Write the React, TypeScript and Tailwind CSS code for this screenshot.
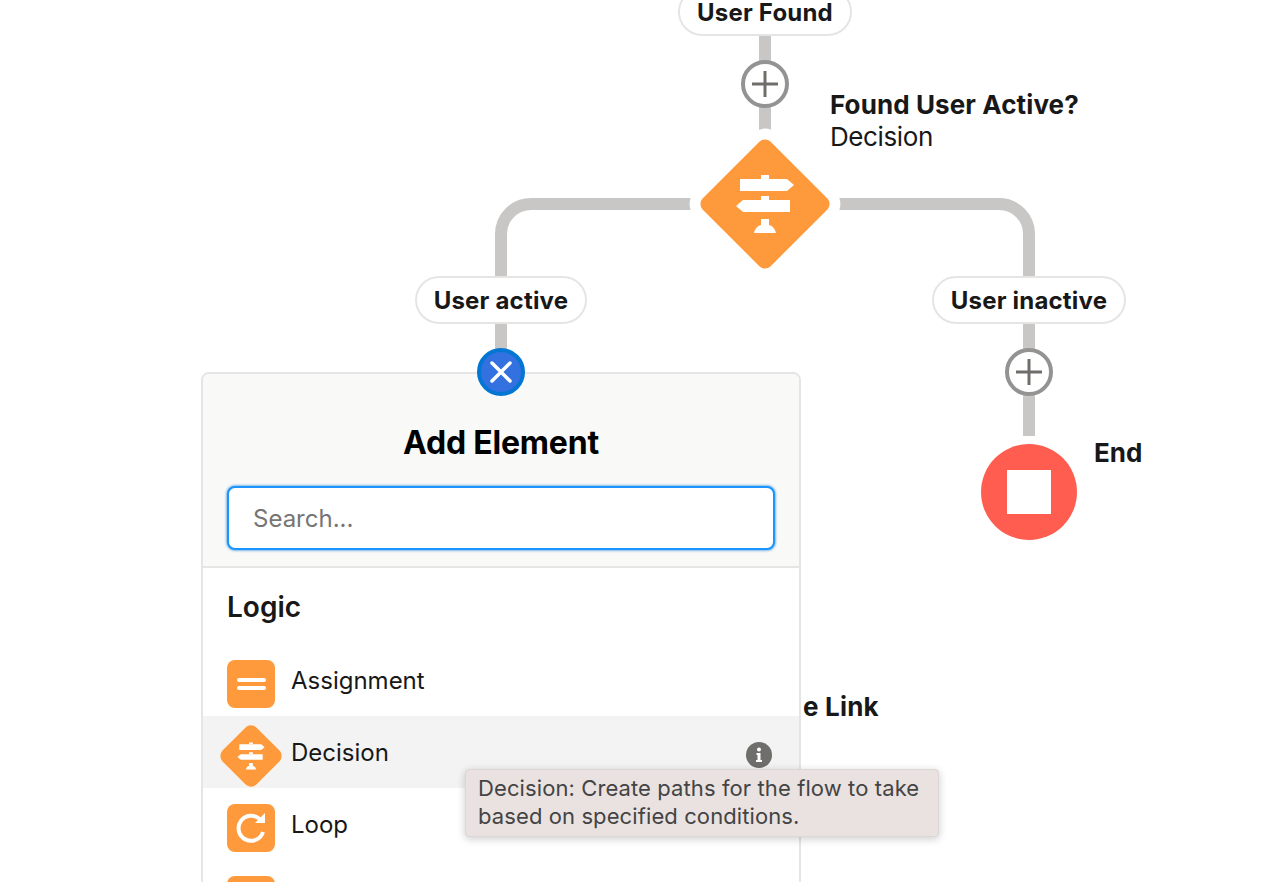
import React from 'react';

const SignpostIcon = ({ className }: { className: string }) => (
  <svg viewBox="0 0 60 62" className={className} fill="#fff">
    <path d="M26 1h8v4h-8zM26 22h8v4h-8z" />
    <path d="M5 5H52L59 11L52 17H5Z" />
    <path d="M8 26H55V38H8L1 32Z" />
    <path d="M26 45h8v6c4 1 6 4 7 8H19c1-4 3-7 7-8z" />
  </svg>
);

const PlusButton = ({ className }: { className: string }) => (
  <div className={`absolute flex h-12 w-12 items-center justify-center rounded-full border-4 border-[#939393] bg-white ${className}`}>
    <svg viewBox="0 0 28 28" className="h-7 w-7" stroke="#706e6b" strokeWidth="3">
      <path d="M1 14H27M14 1V27" />
    </svg>
  </div>
);

const Pill = ({ label, className }: { label: string; className: string }) => (
  <div className={`absolute flex h-12 items-center justify-center rounded-3xl border-2 border-[#e5e5e5] bg-white pt-[2px] text-[24px] font-bold tracking-[0.2px] text-[#181818] ${className}`}>
    {label}
  </div>
);

const AssignmentIcon = () => (
  <div className="flex h-12 w-12 shrink-0 flex-col items-center justify-center gap-1 rounded-lg bg-[#ff9a3c]">
    <div className="h-1 w-[29px] rounded-full bg-white" />
    <div className="h-1 w-[29px] rounded-full bg-white" />
  </div>
);

const DecisionIcon = () => (
  <div className="relative h-12 w-12 shrink-0">
    <div className="absolute inset-0 rotate-45 rounded-lg bg-[#ff9a3c]" />
    <SignpostIcon className="absolute left-[10px] top-[10px] h-[29px] w-[28px]" />
  </div>
);

const LoopIcon = () => (
  <div className="h-12 w-12 shrink-0 rounded-lg bg-[#ff9a3c]">
    <svg viewBox="0 0 48 48" className="h-12 w-12">
      <path d="M33 15.5A12.5 12.5 0 1 0 36 28" fill="none" stroke="#fff" strokeWidth="4" />
      <path d="M38 9V19H28Z" fill="#fff" />
    </svg>
  </div>
);

const elements = [
  { label: 'Assignment', icon: <AssignmentIcon />, active: false },
  { label: 'Decision', icon: <DecisionIcon />, active: true },
  { label: 'Loop', icon: <LoopIcon />, active: false },
  { label: '', icon: <AssignmentIcon />, active: false },
];

export default function App() {
  return (
    <div className="relative h-[882px] w-[1268px] overflow-hidden bg-white font-['Inter',sans-serif] text-[#181818]">
      {/* connectors */}
      <svg className="absolute left-0 top-0 h-[882px] w-[1268px]" fill="none" stroke="#c9c7c5" strokeWidth="12">
        <path d="M765 30V204" />
        <path d="M765 204H531A30 30 0 0 0 501 234V372" />
        <path d="M765 204H999A30 30 0 0 1 1029 234V436" />
      </svg>

      <Pill label="User Found" className="left-[678px] top-[-12px] w-[174px]" />
      <PlusButton className="left-[741px] top-[60px]" />

      {/* white halo, then the orange diamond */}
      <div className="absolute left-[707px] top-[146px] h-[116px] w-[116px] rotate-45 rounded-[16px] bg-white" />
      <div className="absolute left-[717px] top-[156px] h-24 w-24 rotate-45 rounded-lg bg-[#ff9a3c]" />
      <SignpostIcon className="absolute left-[735px] top-[174px] h-[62px] w-[60px]" />

      <div className="absolute left-[830px] top-[89px] text-[26px] leading-8">
        <div className="font-bold tracking-[0.1px]">Found User Active?</div>
        <div className="tracking-[-0.4px]">Decision</div>
      </div>

      <Pill label="User active" className="left-[415px] top-[276px] w-[172px]" />
      <Pill label="User inactive" className="left-[932px] top-[276px] w-[194px]" />
      <PlusButton className="left-[1005px] top-[348px]" />

      <div className="absolute left-[981px] top-[444px] flex h-24 w-24 items-center justify-center rounded-full bg-[#ff5d4f]">
        <div className="h-11 w-11 bg-white" />
      </div>
      <div className="absolute left-[1094px] top-[437px] text-[26px] font-bold leading-8">End</div>
      <div className="absolute left-[803px] top-[691px] text-[26px] font-bold leading-8 tracking-[0.2px]">e Link</div>

      {/* add element panel */}
      <div className="absolute left-[201px] top-[372px] w-[600px] overflow-hidden rounded-lg border-2 border-[#e5e5e5] bg-white">
        <div className="border-b-2 border-[#e5e5e5] bg-[#f9f9f8] px-6 pb-4">
          <h2 className="pt-[51px] text-center text-[32px] font-bold leading-9 tracking-[-0.2px] text-black">Add Element</h2>
          <input
            placeholder="Search..."
            readOnly
            className="mt-[25px] h-16 w-full rounded-lg border-2 border-[#1b96ff] bg-white px-6 text-[24px] shadow-[0_0_3px_#0176d3] outline-none placeholder:text-[#757575]"
          />
        </div>
        <h3 className="px-6 pt-[21px] text-[28px] font-semibold leading-9">Logic</h3>
        <div className="mt-[19px] flex flex-col">
          {elements.map((el, i) => (
            <div key={i} className={`flex h-[72px] items-start gap-4 px-6 pt-4 ${el.active ? 'bg-[#f3f3f3]' : ''}`}>
              {el.icon}
              <span className="mt-[3px] text-[24px] leading-9">{el.label}</span>
              {el.active && (
                <svg viewBox="0 0 26 26" className="ml-auto mr-[3px] mt-[10px] h-[26px] w-[26px]">
                  <circle cx="13" cy="13" r="13" fill="#706e6b" />
                  <circle cx="13" cy="7.5" r="2" fill="#fff" />
                  <path d="M10.5 11h4v7h1.5v2h-6v-2h1.5v-5h-1z" fill="#fff" />
                </svg>
              )}
            </div>
          ))}
        </div>
      </div>

      {/* close button sits on the panel edge */}
      <div className="absolute left-[477px] top-[348px] flex h-12 w-12 items-center justify-center rounded-full border-4 border-[#0176d3] bg-[#3371e0]">
        <svg viewBox="0 0 22 22" className="h-[22px] w-[22px]" stroke="#fff" strokeWidth="3.5" strokeLinecap="round">
          <path d="M2 2L20 20M20 2L2 20" />
        </svg>
      </div>

      <div className="absolute left-[465px] top-[769px] h-[68px] w-[474px] rounded-sm border border-[#dcd6d4] bg-[#e9e2e0] px-3 pt-[4px] text-[22px] leading-7 tracking-[0.1px] text-[#444] shadow-[0_2px_8px_rgba(0,0,0,0.2)]">
        Decision: Create paths for the flow to take based on specified conditions.
      </div>
    </div>
  );
}
